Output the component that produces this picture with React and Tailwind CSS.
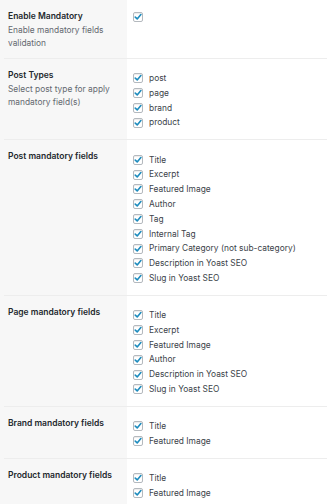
const Check = () => (
  <span className="flex h-[10px] w-[10px] shrink-0 items-center justify-center rounded-[2px] border border-[#b4b9be] bg-white shadow-[inset_0_1px_1px_rgba(0,0,0,0.08)]">
    <svg width="8" height="8" viewBox="0 0 10 10">
      <path d="M1.6 5.2 L4 7.4 L8.6 2" fill="none" stroke="#1e8cbe" strokeWidth="2" strokeLinecap="round" strokeLinejoin="round" />
    </svg>
  </span>
);

const Item = ({ label }) => (
  <label className="flex h-[14.8px] items-center gap-[6px] text-[8.4px] text-[#3c434a]">
    <Check />
    <span>{label}</span>
  </label>
);

const Divider = () => (
  <div className="flex h-px">
    <div className="w-[4px] bg-[#f7f7f7]" />
    <div className="flex-1 bg-[#ededed]" />
  </div>
);

const Row = ({ title, desc, items }) => (
  <div className="flex">
    <div className="w-[127px] shrink-0 bg-[#f7f7f7] pl-[8px] pr-2 pt-[10px] pb-[8px]">
      <h3 className="text-[8.5px] font-semibold leading-[13px] text-[#23282d]">{title}</h3>
      {desc && <p className="mt-px text-[8.4px] leading-[12.5px] text-[#646970]">{desc}</p>}
    </div>
    <div className="flex flex-1 flex-col bg-white pl-[6px] pt-[12px] pb-[9.3px]">
      {items.map((it) => (
        <Item key={it} label={it} />
      ))}
    </div>
  </div>
);

export default function App() {
  const rows = [
    {
      title: "Post Types",
      desc: "Select post type for apply mandatory field(s)",
      items: ["post", "page", "brand", "product"],
    },
    {
      title: "Post mandatory fields",
      items: [
        "Title",
        "Excerpt",
        "Featured Image",
        "Author",
        "Tag",
        "Internal Tag",
        "Primary Category (not sub-category)",
        "Description in Yoast SEO",
        "Slug in Yoast SEO",
      ],
    },
    {
      title: "Page mandatory fields",
      items: ["Title", "Excerpt", "Featured Image", "Author", "Description in Yoast SEO", "Slug in Yoast SEO"],
    },
    { title: "Brand mandatory fields", items: ["Title", "Featured Image"] },
    { title: "Product mandatory fields", items: ["Title", "Featured Image"] },
  ];

  return (
    <div className="h-[504px] w-[327px] overflow-hidden bg-white font-['Inter',sans-serif]">
      <div className="flex">
        <div className="w-[127px] shrink-0 bg-[#f7f7f7] pl-[8px] pr-2 pt-[9.5px] pb-[8.5px]">
          <h3 className="text-[8.5px] font-semibold leading-[13px] text-[#23282d]">Enable Mandatory</h3>
          <p className="mt-px text-[8.4px] leading-[13px] text-[#646970]">Enable mandatory fields validation</p>
        </div>
        <div className="flex-1 bg-white pl-[6px] pt-[12px]">
          <Check />
        </div>
      </div>
      {rows.map((r) => (
        <div key={r.title}>
          <Divider />
          <Row {...r} />
        </div>
      ))}
      <div className="flex h-[40px]">
        <div className="w-[127px] bg-[#f7f7f7]" />
      </div>
    </div>
  );
}
